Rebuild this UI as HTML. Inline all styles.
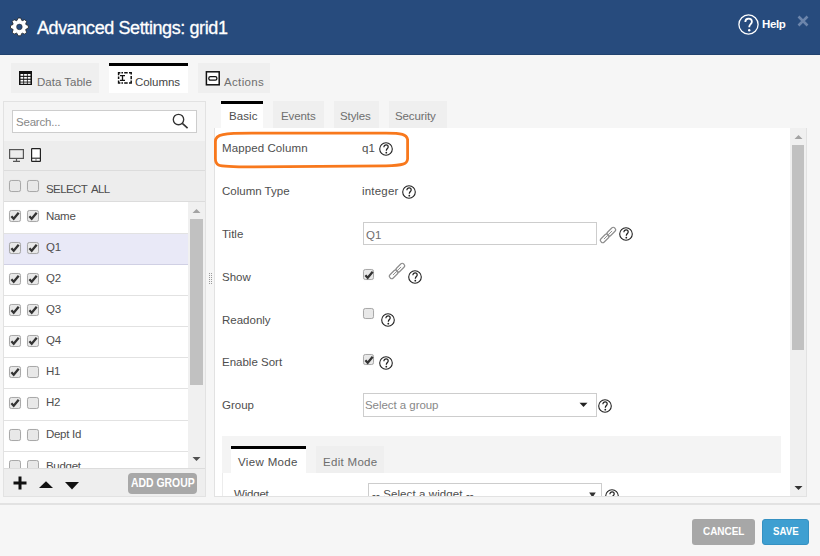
<!DOCTYPE html>
<html><head><meta charset="utf-8">
<style>
*{box-sizing:border-box;margin:0;padding:0}
html,body{width:820px;height:556px;overflow:hidden;background:#f6f6f6;font-family:"Liberation Sans",sans-serif;color:#333}
body{position:relative}
.a{position:absolute}
.t{position:absolute;white-space:nowrap;line-height:1;font-size:11.5px;color:#4e4e4e}
svg{position:absolute;overflow:visible}
#hdr{left:0;top:0;width:820px;height:55px;background:#274b7d;border-bottom:1px solid #21426f}
.tab{position:absolute;background:#efefef}
.tab.on{background:#fff;border-top:3px solid #000}
.cb{position:absolute;width:12px;height:12px;border:1px solid #a9a9a9;border-radius:2.5px;background:#e8e8e8;box-shadow:0 0 1px rgba(0,0,0,0.15)}
.row{position:absolute;left:4px;width:184px;height:31px;background:#fff;border-bottom:1px solid #e2e2e2}
.row.sel{background:#e9e9f7;border-bottom-color:#d0d0e4}
.q{position:absolute;width:14px;height:14px}
.btn{position:absolute;border-radius:3px;color:#fff;font-weight:bold;text-align:center;white-space:nowrap}
</style></head><body>
<!-- header -->
<div id="hdr" class="a"></div>
<svg style="left:9px;top:17px" width="21" height="21" viewBox="0 0 21 21">
 <path d="M8.04 3.42 L9.07 1.00 L11.73 1.00 L12.76 3.42 L13.32 3.65 L15.75 2.67 L17.63 4.55 L16.65 6.98 L16.88 7.54 L19.30 8.57 L19.30 11.23 L16.88 12.26 L16.65 12.82 L17.63 15.25 L15.75 17.13 L13.32 16.15 L12.76 16.38 L11.73 18.80 L9.07 18.80 L8.04 16.38 L7.48 16.15 L5.05 17.13 L3.17 15.25 L4.15 12.82 L3.92 12.26 L1.50 11.23 L1.50 8.57 L3.92 7.54 L4.15 6.98 L3.17 4.55 L5.05 2.67 L7.48 3.65 Z" fill="#fff" stroke="#222" stroke-width="0.8" stroke-linejoin="round"/>
 <circle cx="10.4" cy="9.9" r="2.8" fill="#274b7d" stroke="#333" stroke-width="0.6"/>
</svg>
<div class="t" style="left:37px;top:19px;font-size:18px;color:#fff;-webkit-text-stroke:0.3px #fff;letter-spacing:-0.4px">Advanced Settings: grid1</div>
<svg style="left:738px;top:14px" width="21" height="21" viewBox="0 0 21 21">
 <circle cx="10.5" cy="10.5" r="9.6" fill="none" stroke="#fff" stroke-width="1.3"/>
 <path d="M7.3 8 C7.3 5.6 9 4.6 10.6 4.6 C12.4 4.6 13.9 5.8 13.9 7.7 C13.9 9.8 11.3 10.3 11.3 12.6 L11.3 13.3" fill="none" stroke="#fff" stroke-width="1.8"/>
 <circle cx="11.2" cy="16.2" r="1.2" fill="#fff"/>
</svg>
<div class="t" style="left:762px;top:19px;font-size:11.5px;font-weight:bold;color:#fff;letter-spacing:-0.4px">Help</div>
<svg style="left:797px;top:15px" width="12" height="12" viewBox="0 0 12 12">
 <path d="M1.5 1.5 L10.5 10.5 M10.5 1.5 L1.5 10.5" stroke="#6c85ab" stroke-width="2.6"/>
</svg>

<!-- top tabs -->
<div class="tab" style="left:11px;top:63px;width:88px;height:30px"></div>
<svg style="left:19px;top:71px" width="13" height="14" viewBox="0 0 13 14">
 <rect x="0" y="0" width="13" height="14" fill="#111"/>
 <g fill="#fff">
  <rect x="1.5" y="3" width="2.8" height="1.8"/><rect x="5.1" y="3" width="2.8" height="1.8"/><rect x="8.7" y="3" width="2.8" height="1.8"/>
  <rect x="1.5" y="5.9" width="2.8" height="1.8"/><rect x="5.1" y="5.9" width="2.8" height="1.8"/><rect x="8.7" y="5.9" width="2.8" height="1.8"/>
  <rect x="1.5" y="8.8" width="2.8" height="1.8"/><rect x="5.1" y="8.8" width="2.8" height="1.8"/><rect x="8.7" y="8.8" width="2.8" height="1.8"/>
  <rect x="1.5" y="11.5" width="2.8" height="1.3"/><rect x="5.1" y="11.5" width="2.8" height="1.3"/><rect x="8.7" y="11.5" width="2.8" height="1.3"/>
 </g>
</svg>
<div class="t" style="left:37px;top:77px;color:#6e6e6e;letter-spacing:0px">Data Table</div>

<div class="tab on" style="left:109px;top:63px;width:79px;height:30px"></div>
<svg style="left:117px;top:71px" width="16" height="14" viewBox="0 0 16 14">
 <path d="M1.6 4.2 V1.8 H3.4 M4.4 1.8 H6 M7.2 1.8 H10.7 M12 1.8 H14.2 V3.6 M14.2 5 V8.2 M14.2 9.6 V12 H12 M10.7 12 H7.2 M6 12 H4.4 M3.4 12 H1.6 V9.4 M1.6 5.4 V8" fill="none" stroke="#111" stroke-width="1.5"/>
 <path d="M3 4.6 H8 M5.5 4.6 V9.4 M3 9.4 H8" fill="none" stroke="#111" stroke-width="1.3"/>
</svg>
<div class="t" style="left:135px;top:77px;color:#444;letter-spacing:-0.05px">Columns</div>

<div class="tab" style="left:198px;top:63px;width:72px;height:30px"></div>
<svg style="left:205px;top:71px" width="15" height="14" viewBox="0 0 15 14">
 <rect x="1.4" y="0.8" width="12.8" height="13" fill="#fff" stroke="#111" stroke-width="1.5"/>
 <rect x="3.8" y="5.6" width="8.1" height="3.6" rx="1.6" fill="none" stroke="#111" stroke-width="1.3"/>
</svg>
<div class="t" style="left:224px;top:77px;color:#6e6e6e;letter-spacing:0.35px">Actions</div>

<!-- left panel -->
<div class="a" style="left:3px;top:101px;width:203px;height:396px;border:1px solid #e2e2e2;background:#f4f4f4"></div>
<div class="a" style="left:12px;top:110px;width:185px;height:23px;border:1px solid #cdcdcd;background:#fff"></div>
<div class="t" style="left:16px;top:117px;color:#888;letter-spacing:-0.2px">Search...</div>
<svg style="left:172px;top:113px" width="17" height="16" viewBox="0 0 17 16">
 <circle cx="6.5" cy="6.5" r="5.2" fill="none" stroke="#333" stroke-width="1.35"/>
 <path d="M10.3 10.3 L15.6 15.2" stroke="#333" stroke-width="1.6"/>
</svg>
<div class="a" style="left:4px;top:141px;width:201px;height:30px;background:#ededed;border-bottom:1px solid #dcdcdc"></div>
<svg style="left:9px;top:149px" width="15" height="13" viewBox="0 0 15 13">
 <rect x="0.6" y="0.6" width="13.8" height="8.8" fill="none" stroke="#555" stroke-width="1.2"/>
 <path d="M7.5 9.5 V12 M4 12.3 H11" stroke="#555" stroke-width="1.2"/>
</svg>
<svg style="left:31px;top:148px" width="10" height="14" viewBox="0 0 10 14">
 <rect x="0.6" y="0.6" width="8.8" height="12.8" rx="0.5" fill="#fff" stroke="#222" stroke-width="1.2"/>
 <path d="M0.6 10.2 H9.4" stroke="#222" stroke-width="1.1"/>
 <circle cx="5" cy="11.9" r="0.6" fill="#222"/>
</svg>
<div class="a" style="left:4px;top:171px;width:201px;height:31px;background:#ededed;border-bottom:1px solid #dcdcdc"></div>
<div class="cb" style="left:9px;top:180px"></div>
<div class="cb" style="left:27px;top:180px"></div>
<div class="t" style="left:46px;top:184px;letter-spacing:-0.6px;word-spacing:2px">SELECT ALL</div>

<div class="row" style="top:202px;height:32px"></div>
<div class="row sel" style="top:234px"></div>
<div class="row" style="top:265px"></div>
<div class="row" style="top:296px"></div>
<div class="row" style="top:327px"></div>
<div class="row" style="top:358px"></div>
<div class="row" style="top:389px;height:32px"></div>
<div class="row" style="top:421px"></div>
<div class="row" style="top:452px;height:16px;border-bottom:0"></div>
<div class="cb" style="left:9px;top:210px"><svg style="left:0;top:0" width="10" height="10" viewBox="0 0 10 10"><path d="M1.4 5.2 L3.7 7.7 L8.7 1.7" fill="none" stroke="#333" stroke-width="2.3"/></svg></div>
<div class="cb" style="left:27px;top:210px"><svg style="left:0;top:0" width="10" height="10" viewBox="0 0 10 10"><path d="M1.4 5.2 L3.7 7.7 L8.7 1.7" fill="none" stroke="#333" stroke-width="2.3"/></svg></div>
<div class="t" style="left:46px;top:211px;letter-spacing:-0.3px">Name</div>
<div class="cb" style="left:9px;top:242px"><svg style="left:0;top:0" width="10" height="10" viewBox="0 0 10 10"><path d="M1.4 5.2 L3.7 7.7 L8.7 1.7" fill="none" stroke="#333" stroke-width="2.3"/></svg></div>
<div class="cb" style="left:27px;top:242px"><svg style="left:0;top:0" width="10" height="10" viewBox="0 0 10 10"><path d="M1.4 5.2 L3.7 7.7 L8.7 1.7" fill="none" stroke="#333" stroke-width="2.3"/></svg></div>
<div class="t" style="left:46px;top:242px;letter-spacing:-0.3px">Q1</div>
<div class="cb" style="left:9px;top:273px"><svg style="left:0;top:0" width="10" height="10" viewBox="0 0 10 10"><path d="M1.4 5.2 L3.7 7.7 L8.7 1.7" fill="none" stroke="#333" stroke-width="2.3"/></svg></div>
<div class="cb" style="left:27px;top:273px"><svg style="left:0;top:0" width="10" height="10" viewBox="0 0 10 10"><path d="M1.4 5.2 L3.7 7.7 L8.7 1.7" fill="none" stroke="#333" stroke-width="2.3"/></svg></div>
<div class="t" style="left:46px;top:273px;letter-spacing:-0.3px">Q2</div>
<div class="cb" style="left:9px;top:304px"><svg style="left:0;top:0" width="10" height="10" viewBox="0 0 10 10"><path d="M1.4 5.2 L3.7 7.7 L8.7 1.7" fill="none" stroke="#333" stroke-width="2.3"/></svg></div>
<div class="cb" style="left:27px;top:304px"><svg style="left:0;top:0" width="10" height="10" viewBox="0 0 10 10"><path d="M1.4 5.2 L3.7 7.7 L8.7 1.7" fill="none" stroke="#333" stroke-width="2.3"/></svg></div>
<div class="t" style="left:46px;top:304px;letter-spacing:-0.3px">Q3</div>
<div class="cb" style="left:9px;top:335px"><svg style="left:0;top:0" width="10" height="10" viewBox="0 0 10 10"><path d="M1.4 5.2 L3.7 7.7 L8.7 1.7" fill="none" stroke="#333" stroke-width="2.3"/></svg></div>
<div class="cb" style="left:27px;top:335px"><svg style="left:0;top:0" width="10" height="10" viewBox="0 0 10 10"><path d="M1.4 5.2 L3.7 7.7 L8.7 1.7" fill="none" stroke="#333" stroke-width="2.3"/></svg></div>
<div class="t" style="left:46px;top:335px;letter-spacing:-0.3px">Q4</div>
<div class="cb" style="left:9px;top:366px"><svg style="left:0;top:0" width="10" height="10" viewBox="0 0 10 10"><path d="M1.4 5.2 L3.7 7.7 L8.7 1.7" fill="none" stroke="#333" stroke-width="2.3"/></svg></div>
<div class="cb" style="left:27px;top:366px"></div>
<div class="t" style="left:46px;top:366px;letter-spacing:-0.3px">H1</div>
<div class="cb" style="left:9px;top:397px"><svg style="left:0;top:0" width="10" height="10" viewBox="0 0 10 10"><path d="M1.4 5.2 L3.7 7.7 L8.7 1.7" fill="none" stroke="#333" stroke-width="2.3"/></svg></div>
<div class="cb" style="left:27px;top:397px"></div>
<div class="t" style="left:46px;top:397px;letter-spacing:-0.3px">H2</div>
<div class="cb" style="left:9px;top:429px"></div>
<div class="cb" style="left:27px;top:429px"></div>
<div class="t" style="left:46px;top:429px;letter-spacing:-0.3px">Dept Id</div>
<div class="a" style="left:9px;top:460px;width:12px;height:8px;overflow:hidden"><div class="cb" style="left:0;top:0"></div></div>
<div class="a" style="left:27px;top:460px;width:12px;height:8px;overflow:hidden"><div class="cb" style="left:0;top:0"></div></div>
<div class="a" style="left:40px;top:451px;width:140px;height:17px;overflow:hidden"><div class="t" style="left:6px;top:10px;letter-spacing:-0.3px">Budget</div></div>

<!-- scrollbar left -->
<div class="a" style="left:188px;top:202px;width:17px;height:266px;background:#f0f0f0"></div>
<svg style="left:192px;top:208px" width="9" height="6" viewBox="0 0 9 6"><path d="M0.5 5 L4.5 1 L8.5 5 Z" fill="#a3a3a3"/></svg>
<div class="a" style="left:190px;top:219px;width:13px;height:166px;background:#c1c1c1"></div>
<svg style="left:192px;top:456px" width="9" height="6" viewBox="0 0 9 6"><path d="M0.5 1 L4.5 5 L8.5 1 Z" fill="#505050"/></svg>

<!-- left footer -->
<div class="a" style="left:4px;top:468px;width:201px;height:28px;background:#eeeeee;border-top:1px solid #dcdcdc"></div>
<svg style="left:13px;top:476px" width="14" height="14" viewBox="0 0 14 14"><path d="M7 0.5 V13.5 M0.5 7 H13.5" stroke="#111" stroke-width="3"/></svg>
<svg style="left:39px;top:481px" width="14" height="7" viewBox="0 0 14 7"><path d="M0 7 L7 0.3 L14 7 Z" fill="#111"/></svg>
<svg style="left:65px;top:482px" width="14" height="8" viewBox="0 0 14 8"><path d="M0 0 L7 7.5 L14 0 Z" fill="#111"/></svg>
<div class="btn" style="left:128px;top:473px;width:69px;height:21px;background:#a8a8a8;border-radius:4px"></div>
<div class="t" style="left:131px;top:477px;font-size:12px;font-weight:bold;color:#fff;transform:scaleX(0.868);transform-origin:0 0">ADD GROUP</div>

<!-- splitter grip -->
<svg style="left:209px;top:273px" width="3" height="12" viewBox="0 0 3 12"><g fill="#9a9a9a"><rect x="0" y="0" width="1" height="1"/><rect x="0" y="2" width="1" height="1"/><rect x="0" y="4" width="1" height="1"/><rect x="0" y="6" width="1" height="1"/><rect x="0" y="8" width="1" height="1"/><rect x="0" y="10" width="1" height="1"/><rect x="2" y="0" width="1" height="1"/><rect x="2" y="2" width="1" height="1"/><rect x="2" y="4" width="1" height="1"/><rect x="2" y="6" width="1" height="1"/><rect x="2" y="8" width="1" height="1"/><rect x="2" y="10" width="1" height="1"/></g></svg>

<!-- right tabs -->
<div class="tab on" style="left:221px;top:101px;width:42px;height:28px"></div>
<div class="t" style="left:229px;top:111px;letter-spacing:0.1px">Basic</div>
<div class="tab" style="left:273px;top:101px;width:51px;height:27px"></div>
<div class="t" style="left:281px;top:111px;color:#6e6e6e;letter-spacing:-0.1px">Events</div>
<div class="tab" style="left:334px;top:101px;width:45px;height:27px"></div>
<div class="t" style="left:340px;top:111px;color:#6e6e6e;letter-spacing:-0.1px">Styles</div>
<div class="tab" style="left:389px;top:101px;width:58px;height:27px"></div>
<div class="t" style="left:395px;top:111px;color:#6e6e6e;letter-spacing:-0.1px">Security</div>

<!-- right panel -->
<div class="a" style="left:214px;top:128px;width:593px;height:369px;background:#fff;border:1px solid #e2e2e2;border-top:0"></div>
<div class="a" style="left:221px;top:128px;width:42px;height:1px;background:#fff"></div>
<div class="a" style="left:790px;top:128px;width:16px;height:368px;background:#f0f0f0"></div>
<svg style="left:794px;top:134px" width="9" height="6" viewBox="0 0 9 6"><path d="M0.5 5 L4.5 1 L8.5 5 Z" fill="#a3a3a3"/></svg>
<div class="a" style="left:792px;top:145px;width:12px;height:205px;background:#c1c1c1"></div>
<svg style="left:794px;top:485px" width="9" height="6" viewBox="0 0 9 6"><path d="M0.5 1 L4.5 5 L8.5 1 Z" fill="#333"/></svg>

<div class="t" style="left:222px;top:143px;letter-spacing:0.1px">Mapped Column</div>
<div class="t" style="left:222px;top:186px;letter-spacing:0px">Column Type</div>
<div class="t" style="left:222px;top:229px;letter-spacing:0px">Title</div>
<div class="t" style="left:222px;top:272px;letter-spacing:0px">Show</div>
<div class="t" style="left:222px;top:315px;letter-spacing:0px">Readonly</div>
<div class="t" style="left:222px;top:357px;letter-spacing:0px">Enable Sort</div>
<div class="t" style="left:222px;top:400px;letter-spacing:0px">Group</div>

<div class="t" style="left:362px;top:143px;letter-spacing:0px">q1</div>
<div class="q" style="left:379px;top:142px"><svg width="14" height="14" viewBox="0 0 14 14"><circle cx="7" cy="7" r="6.3" fill="none" stroke="#222" stroke-width="1.1"/><path d="M4.9 5.2 C4.9 3.6 5.9 2.9 7.1 2.9 C8.4 2.9 9.2 3.8 9.2 4.9 C9.2 6.4 7.3 6.7 7.3 8.7" fill="none" stroke="#222" stroke-width="1.2"/><circle cx="7.3" cy="10.7" r="0.9" fill="#222"/></svg></div>
<div class="t" style="left:362px;top:186px;letter-spacing:0.2px">integer</div>
<div class="q" style="left:402px;top:185px"><svg width="14" height="14" viewBox="0 0 14 14"><circle cx="7" cy="7" r="6.3" fill="none" stroke="#222" stroke-width="1.1"/><path d="M4.9 5.2 C4.9 3.6 5.9 2.9 7.1 2.9 C8.4 2.9 9.2 3.8 9.2 4.9 C9.2 6.4 7.3 6.7 7.3 8.7" fill="none" stroke="#222" stroke-width="1.2"/><circle cx="7.3" cy="10.7" r="0.9" fill="#222"/></svg></div>

<div class="a" style="left:363px;top:222px;width:234px;height:23px;border:1px solid #cdcdcd;background:#fff"></div>
<div class="t" style="left:366px;top:230px;color:#6e6e6e;letter-spacing:0px">Q1</div>
<svg style="left:600px;top:227px" width="16" height="16" viewBox="0 0 16 16">
 <g fill="none" stroke="#8c8c8c" stroke-width="1.15" transform="rotate(-45 8 8)">
  <rect x="-1.7" y="5.7" width="10.2" height="4.6" rx="2.1"/>
  <rect x="7.5" y="5.7" width="10.2" height="4.6" rx="2.1"/>
  <path d="M2.2 8 H6.5 M9.5 8 H13.8" stroke-width="0.9"/>
 </g>
</svg>
<div class="q" style="left:619px;top:227px"><svg width="14" height="14" viewBox="0 0 14 14"><circle cx="7" cy="7" r="6.3" fill="none" stroke="#222" stroke-width="1.1"/><path d="M4.9 5.2 C4.9 3.6 5.9 2.9 7.1 2.9 C8.4 2.9 9.2 3.8 9.2 4.9 C9.2 6.4 7.3 6.7 7.3 8.7" fill="none" stroke="#222" stroke-width="1.2"/><circle cx="7.3" cy="10.7" r="0.9" fill="#222"/></svg></div>

<div class="cb" style="left:363px;top:269px;width:11px;height:11px"><svg style="left:0;top:0" width="10" height="10" viewBox="0 0 10 10"><path d="M1.4 5.2 L3.7 7.7 L8.7 1.7" fill="none" stroke="#333" stroke-width="2.3"/></svg></div>
<svg style="left:389px;top:263px" width="16" height="16" viewBox="0 0 16 16">
 <g fill="none" stroke="#8c8c8c" stroke-width="1.15" transform="rotate(-45 8 8)">
  <rect x="-1.7" y="5.7" width="10.2" height="4.6" rx="2.1"/>
  <rect x="7.5" y="5.7" width="10.2" height="4.6" rx="2.1"/>
  <path d="M2.2 8 H6.5 M9.5 8 H13.8" stroke-width="0.9"/>
 </g>
</svg>
<div class="q" style="left:408px;top:270px"><svg width="14" height="14" viewBox="0 0 14 14"><circle cx="7" cy="7" r="6.3" fill="none" stroke="#222" stroke-width="1.1"/><path d="M4.9 5.2 C4.9 3.6 5.9 2.9 7.1 2.9 C8.4 2.9 9.2 3.8 9.2 4.9 C9.2 6.4 7.3 6.7 7.3 8.7" fill="none" stroke="#222" stroke-width="1.2"/><circle cx="7.3" cy="10.7" r="0.9" fill="#222"/></svg></div>

<div class="cb" style="left:363px;top:308px;width:11px;height:11px"></div>
<div class="q" style="left:381px;top:313px"><svg width="14" height="14" viewBox="0 0 14 14"><circle cx="7" cy="7" r="6.3" fill="none" stroke="#222" stroke-width="1.1"/><path d="M4.9 5.2 C4.9 3.6 5.9 2.9 7.1 2.9 C8.4 2.9 9.2 3.8 9.2 4.9 C9.2 6.4 7.3 6.7 7.3 8.7" fill="none" stroke="#222" stroke-width="1.2"/><circle cx="7.3" cy="10.7" r="0.9" fill="#222"/></svg></div>

<div class="cb" style="left:363px;top:354px;width:11px;height:11px"><svg style="left:0;top:0" width="10" height="10" viewBox="0 0 10 10"><path d="M1.4 5.2 L3.7 7.7 L8.7 1.7" fill="none" stroke="#333" stroke-width="2.3"/></svg></div>
<div class="q" style="left:379px;top:356px"><svg width="14" height="14" viewBox="0 0 14 14"><circle cx="7" cy="7" r="6.3" fill="none" stroke="#222" stroke-width="1.1"/><path d="M4.9 5.2 C4.9 3.6 5.9 2.9 7.1 2.9 C8.4 2.9 9.2 3.8 9.2 4.9 C9.2 6.4 7.3 6.7 7.3 8.7" fill="none" stroke="#222" stroke-width="1.2"/><circle cx="7.3" cy="10.7" r="0.9" fill="#222"/></svg></div>

<div class="a" style="left:363px;top:393px;width:234px;height:24px;border:1px solid #cdcdcd;background:#fff"></div>
<div class="t" style="left:365px;top:400px;color:#888;letter-spacing:-0.05px">Select a group</div>
<svg style="left:579px;top:402px" width="9" height="6" viewBox="0 0 9 6"><path d="M0.5 0.8 L4.5 5 L8.5 0.8 Z" fill="#222"/></svg>
<div class="q" style="left:598px;top:399px"><svg width="14" height="14" viewBox="0 0 14 14"><circle cx="7" cy="7" r="6.3" fill="none" stroke="#222" stroke-width="1.1"/><path d="M4.9 5.2 C4.9 3.6 5.9 2.9 7.1 2.9 C8.4 2.9 9.2 3.8 9.2 4.9 C9.2 6.4 7.3 6.7 7.3 8.7" fill="none" stroke="#222" stroke-width="1.2"/><circle cx="7.3" cy="10.7" r="0.9" fill="#222"/></svg></div>

<!-- inner view/edit panel -->
<div class="a" style="left:222px;top:436px;width:559px;height:60px;background:#fff;border-left:1px solid #ececec"></div>
<div class="a" style="left:222px;top:436px;width:559px;height:37px;background:#f4f4f4"></div>
<div class="tab on" style="left:231px;top:446px;width:75px;height:27px"></div>
<div class="t" style="left:238px;top:457px;letter-spacing:0.35px">View Mode</div>
<div class="tab" style="left:316px;top:446px;width:68px;height:27px"></div>
<div class="t" style="left:323px;top:457px;color:#6e6e6e;letter-spacing:0.3px">Edit Mode</div>
<div class="a" style="left:214px;top:473px;width:576px;height:23px;overflow:hidden">
 <div class="t" style="left:20px;top:16px;letter-spacing:-0.2px">Widget</div>
 <div class="a" style="left:154px;top:10px;width:234px;height:24px;border:1px solid #cdcdcd;background:#fff"></div>
 <div class="t" style="left:158px;top:16px;letter-spacing:0.1px">-- Select a widget --</div>
 <svg style="left:375px;top:19px" width="7" height="6" viewBox="0 0 7 6"><path d="M0.2 0.5 L3.5 5.5 L6.8 0.5 Z" fill="#333"/></svg>
 <div class="q" style="left:391px;top:16px"><svg width="14" height="14" viewBox="0 0 14 14"><circle cx="7" cy="7" r="6.3" fill="none" stroke="#222" stroke-width="1.1"/><path d="M4.9 5.2 C4.9 3.6 5.9 2.9 7.1 2.9 C8.4 2.9 9.2 3.8 9.2 4.9 C9.2 6.4 7.3 6.7 7.3 8.7" fill="none" stroke="#222" stroke-width="1.2"/><circle cx="7.3" cy="10.7" r="0.9" fill="#222"/></svg></div>
</div>

<!-- orange highlight -->
<svg style="left:0;top:0" width="820" height="556" viewBox="0 0 820 556">
 <path d="M223 134.6 C229 133.4 238 133.2 252 133.2 L386 133.2 C402 133.2 406.5 134.3 407.6 139.5 L407.6 159 C407.2 164 403 165.6 386 165.8 L252 166.9 C233 166.9 222 166.6 218.5 165 C216 163.8 215.4 162 215.4 158.5 L215.4 141.5 C215.4 137.5 217.5 135.6 223 134.6 Z" fill="none" stroke="#f8781c" stroke-width="2.8"/>
</svg>

<!-- footer -->
<div class="a" style="left:0;top:503px;width:820px;height:2px;background:#e2e2e2"></div>
<div class="btn" style="left:692px;top:519px;width:63px;height:26px;background:#a7a7a7"></div>
<div class="t" style="left:703px;top:526px;font-size:11.5px;font-weight:bold;color:#fff;transform:scaleX(0.865);transform-origin:0 0">CANCEL</div>
<div class="btn" style="left:762px;top:519px;width:47px;height:26px;background:#3e9fd1;border:1px solid #3591c2"></div>
<div class="t" style="left:773px;top:526px;font-size:11.5px;font-weight:bold;color:#fff;transform:scaleX(0.84);transform-origin:0 0">SAVE</div>
</body></html>
